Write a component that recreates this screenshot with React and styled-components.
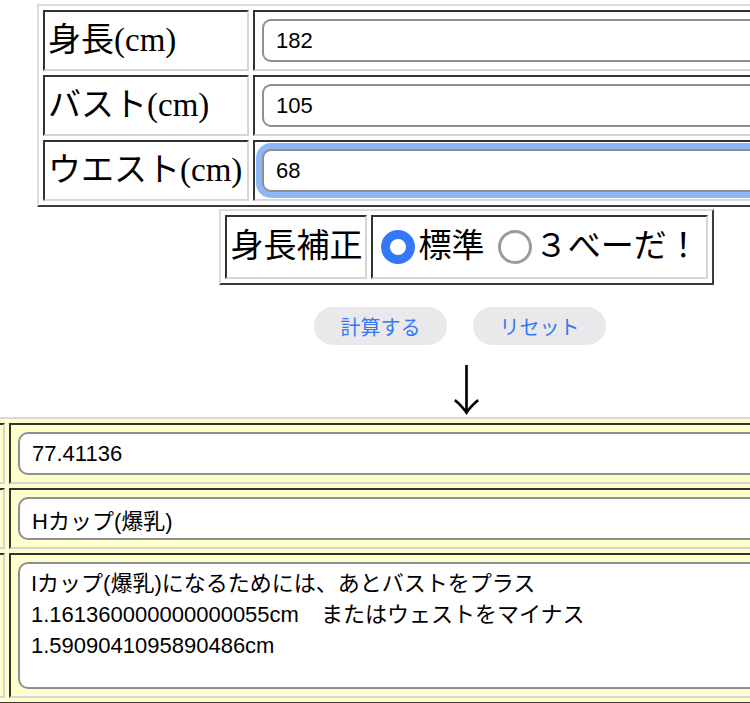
import React from "react";
import styled, { createGlobalStyle } from "styled-components";

const GlobalStyle = createGlobalStyle`
  html, body {
    margin: 0;
    padding: 0;
    overflow: hidden;
    background: #fff;
  }
  body {
    font-family: "Liberation Serif", "Noto Sans CJK JP", serif;
    color: #000;
  }
`;

const Page = styled.div`
  width: 933px;
  padding-top: 4px;
`;

const FormTable = styled.table`
  margin: ${(p) => p.$top || 0}px auto 0;
  width: ${(p) => p.$width || "auto"};
  border-collapse: separate;
  border-spacing: 4px;
  border: 2px solid;
  border-color: #dcdcdc #3a3a3a #3a3a3a #dcdcdc;
`;

const ResultTable = styled.table`
  margin-left: -111px;
  width: 1000px;
  border-collapse: separate;
  border-spacing: 4px;
  border: 2px solid;
  border-color: #d9d9cf #3a3a3a #3a3a3a #d9d9cf;
  background: #ffffcc;
`;

const Label = styled.td`
  width: ${(p) => (p.$width ? `${p.$width}px` : "auto")};
  height: ${(p) => (p.$height ? `${p.$height}px` : "auto")};
  padding: ${(p) => (p.$wide ? "0 6px 0 3px" : "0 3px")};
  border: 2px solid;
  border-color: #333 #d6d6d6 #d6d6d6 #333;
  font-size: 33px;
  line-height: 1.2;
  text-align: left;
  vertical-align: middle;
  white-space: nowrap;
`;

const Field = styled.td`
  padding: 7px;
  border: 2px solid;
  border-color: #333 #d6d6d6 #d6d6d6 #333;
  vertical-align: middle;
`;

const TextField = styled.input`
  display: block;
  box-sizing: border-box;
  width: 100%;
  height: 43px;
  margin: 0;
  padding: 0 12px;
  border: 2px solid #8e8e93;
  border-radius: ${(p) => p.$radius || 9}px;
  background: #fff;
  color: #000;
  font-family: "Liberation Sans", "Noto Sans CJK JP", sans-serif;
  font-size: 22px;
  outline: none;
  box-shadow: ${(p) => (p.$focused ? "0 0 0 6px #8cb8f6" : "none")};
`;

const Message = styled.textarea`
  display: block;
  box-sizing: border-box;
  width: 100%;
  height: 127px;
  margin: 0;
  padding: 4px 11px;
  border: 2px solid #8e8e93;
  border-radius: 10px;
  background: #fff;
  color: #000;
  font-family: "Liberation Sans", "Noto Sans CJK JP", sans-serif;
  font-size: 22px;
  line-height: 31px;
  resize: none;
  outline: none;
  overflow: hidden;
`;

const Radio = styled.span`
  display: inline-block;
  box-sizing: border-box;
  width: 34px;
  height: 34px;
  margin: 0 3px 0 5px;
  border-radius: 50%;
  background: #fff;
  border: ${(p) => (p.$checked ? "9px solid #3478f6" : "3px solid #9a9a9a")};
  vertical-align: middle;
  position: relative;
  top: -3px;
`;

const ButtonRow = styled.div`
  display: flex;
  justify-content: center;
  gap: 26px;
  margin-top: 22px;
  padding-right: 13px;
`;

const Button = styled.button`
  width: 133px;
  height: 38px;
  border: none;
  border-radius: 19px;
  background: #e9e9eb;
  color: #3478f6;
  font-family: "Noto Sans CJK JP", sans-serif;
  font-size: 20px;
  padding: 0;
`;

const Arrow = styled.div`
  height: 72px;
  text-align: center;
  font-family: "Noto Sans CJK JP", sans-serif;
  font-weight: 300;
  font-size: 54px;
  line-height: 86px;
  overflow: visible;
`;

export default function App() {
  return (
    <Page>
      <GlobalStyle />
      <FormTable $width="859px">
        <tbody>
          <tr>
            <Label $width={196}>身長(cm)</Label>
            <Field>
              <TextField defaultValue="182" />
            </Field>
          </tr>
          <tr>
            <Label $width={196}>バスト(cm)</Label>
            <Field>
              <TextField defaultValue="105" />
            </Field>
          </tr>
          <tr>
            <Label $width={196}>ウエスト(cm)</Label>
            <Field>
              <TextField defaultValue="68" $focused />
            </Field>
          </tr>
        </tbody>
      </FormTable>

      <FormTable $top={2}>
        <tbody>
          <tr>
            <Label $height={60}>身長補正</Label>
            <Label $height={60} $wide>
              <Radio $checked />標準 <Radio />３べーだ！
            </Label>
          </tr>
        </tbody>
      </FormTable>

      <ButtonRow>
        <Button>計算する</Button>
        <Button>リセット</Button>
      </ButtonRow>

      <Arrow>↓</Arrow>

      <ResultTable>
        <tbody>
          <tr>
            <Label $width={100} />
            <Field>
              <TextField defaultValue="77.41136" $radius={10} />
            </Field>
          </tr>
          <tr>
            <Label $width={100} />
            <Field>
              <TextField defaultValue="Hカップ(爆乳)" $radius={10} />
            </Field>
          </tr>
          <tr>
            <Label $width={100} />
            <Field>
              <Message
                defaultValue={
                  "Iカップ(爆乳)になるためには、あとバストをプラス\n1.161360000000000055cm　またはウェストをマイナス\n1.5909041095890486cm"
                }
              />
            </Field>
          </tr>
        </tbody>
      </ResultTable>
    </Page>
  );
}
